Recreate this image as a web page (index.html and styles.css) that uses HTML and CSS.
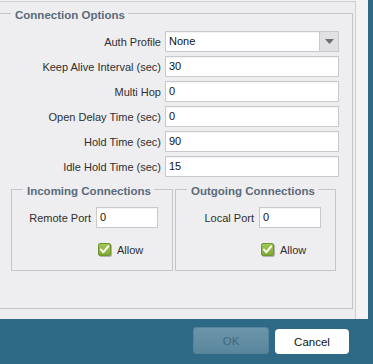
FILE: index.html
```html
<!DOCTYPE html>
<html>
<head>
<meta charset="utf-8">
<link rel="stylesheet" href="styles.css">
</head>
<body>
<div class="panel">
  <div class="outer">
    <fieldset class="conn">
      <legend>Connection Options</legend>
      <div class="form">
        <div class="row"><label>Auth Profile</label>
          <div class="select"><span class="sel-text">None</span><span class="sel-btn"><svg width="9" height="5" viewBox="0 0 9 5"><polygon points="0,0 9,0 4.5,5" fill="#6e6e70"/></svg></span></div>
        </div>
        <div class="row"><label>Keep Alive Interval (sec)</label><div class="input">30</div></div>
        <div class="row"><label>Multi Hop</label><div class="input">0</div></div>
        <div class="row"><label>Open Delay Time (sec)</label><div class="input">0</div></div>
        <div class="row"><label>Hold Time (sec)</label><div class="input">90</div></div>
        <div class="row"><label>Idle Hold Time (sec)</label><div class="input">15</div></div>
      </div>
      <div class="subrow">
        <fieldset class="sub">
          <legend>Incoming Connections</legend>
          <div class="subgrid">
            <label>Remote Port</label><div class="input small">0</div>
            <div class="check"><svg class="box" width="14" height="14" viewBox="0 0 14 14"><defs><linearGradient id="g1" x1="0" y1="0" x2="0" y2="1"><stop offset="0" stop-color="#a3c957"/><stop offset="1" stop-color="#7fa834"/></linearGradient></defs><rect x="0.5" y="0.5" width="12" height="12" rx="1.5" fill="url(#g1)" stroke="#6f9530"/><path d="M3 6.6 L5.4 9.2 L10.2 3.4" fill="none" stroke="#fff" stroke-width="2" stroke-linecap="round" stroke-linejoin="round"/></svg><span>Allow</span></div>
          </div>
        </fieldset>
        <fieldset class="sub">
          <legend>Outgoing Connections</legend>
          <div class="subgrid">
            <label>Local Port</label><div class="input small">0</div>
            <div class="check"><svg class="box" width="14" height="14" viewBox="0 0 14 14"><defs><linearGradient id="g2" x1="0" y1="0" x2="0" y2="1"><stop offset="0" stop-color="#a3c957"/><stop offset="1" stop-color="#7fa834"/></linearGradient></defs><rect x="0.5" y="0.5" width="12" height="12" rx="1.5" fill="url(#g2)" stroke="#6f9530"/><path d="M3 6.6 L5.4 9.2 L10.2 3.4" fill="none" stroke="#fff" stroke-width="2" stroke-linecap="round" stroke-linejoin="round"/></svg><span>Allow</span></div>
          </div>
        </fieldset>
      </div>
    </fieldset>
  </div>
</div>
<div class="footer">
  <button class="btn ok">OK</button>
  <button class="btn cancel">Cancel</button>
</div>
</body>
</html>
```
FILE: styles.css
```css
html, body {
  margin: 0;
  padding: 0;
}
body {
  background: #2e6a86;
  font-family: "Liberation Sans", Arial, sans-serif;
  font-size: 11px;
  color: #2e2e2e;
  width: 373px;
  height: 364px;
  overflow: hidden;
}
.panel {
  width: 368px;
  height: 319px;
  background: #f3f3f4;
  overflow: hidden;
  padding-top: 1px;
  box-sizing: border-box;
}
.outer {
  margin-left: -10px;
  width: 366px;
  min-height: 400px;
  border: 1px solid #cfcfd2;
  border-bottom: none;
  background: #eeeef0;
  box-sizing: border-box;
}
fieldset {
  margin: 0;
  border: 1px solid #c6c6c9;
  min-width: 0;
}
legend {
  padding: 4px 3px 0 4px;
  font-weight: bold;
  font-size: 11.5px;
  line-height: 13px;
  color: #5a6a7a;
}
.conn {
  margin: 3px 2px 0 4px;
  padding: 9px 13px 37px 15px;
}
.form {
  display: flex;
  flex-direction: column;
  gap: 4px;
}
.row {
  display: flex;
  justify-content: flex-end;
  align-items: center;
  gap: 4px;
  height: 21px;
}
.input, .select {
  width: 174px;
  height: 21px;
  box-sizing: border-box;
  border: 1px solid #c9c9cb;
  background: #fff;
  box-shadow: inset 0 1px 1px rgba(0,0,0,0.05);
  padding: 0 3px;
  color: #111;
  line-height: 19px;
  font-size: 11px;
}
.select {
  display: flex;
  padding: 0 0 0 3px;
}
.sel-text {
  flex: 1;
}
.sel-btn {
  width: 20px;
  margin: -1px -1px -1px 0;
  border: 1px solid #c9c9cb;
  background: #e1e1e3;
  display: flex;
  align-items: center;
  justify-content: center;
  box-sizing: border-box;
  height: 21px;
}
.subrow {
  display: grid;
  grid-template-columns: 162px 161px;
  column-gap: 2px;
  margin-top: 4px;
}
.sub {
  padding: 9px 14px 13px 11px;
}
.subgrid {
  display: grid;
  grid-template-columns: auto 62px;
  justify-content: end;
  align-items: center;
  column-gap: 5px;
  row-gap: 15px;
}
.input.small {
  width: 62px;
}
.check {
  grid-column: 2;
  display: flex;
  align-items: center;
  gap: 5px;
  margin-left: 2px;
  height: 14px;
}
.box {
  display: block;
  filter: drop-shadow(1px 1px 0.6px rgba(0,0,0,0.25));
}
.footer {
  height: 45px;
  display: flex;
  justify-content: flex-end;
  align-items: flex-start;
  gap: 6px;
  padding: 8px 24px 0 0;
  box-sizing: border-box;
}
.btn {
  font-family: "Liberation Sans", Arial, sans-serif;
  font-size: 11.5px;
  padding: 0;
  cursor: default;
}
.ok {
  width: 76px;
  height: 27px;
  border: 1px solid #55849b;
  border-radius: 3px;
  background: linear-gradient(#6b95aa, #5a869d);
  color: #3e687e;
}
.cancel {
  width: 74px;
  height: 25px;
  margin-top: 2px;
  border: none;
  border-radius: 4px;
  background: #fff;
  color: #111;
}
```
